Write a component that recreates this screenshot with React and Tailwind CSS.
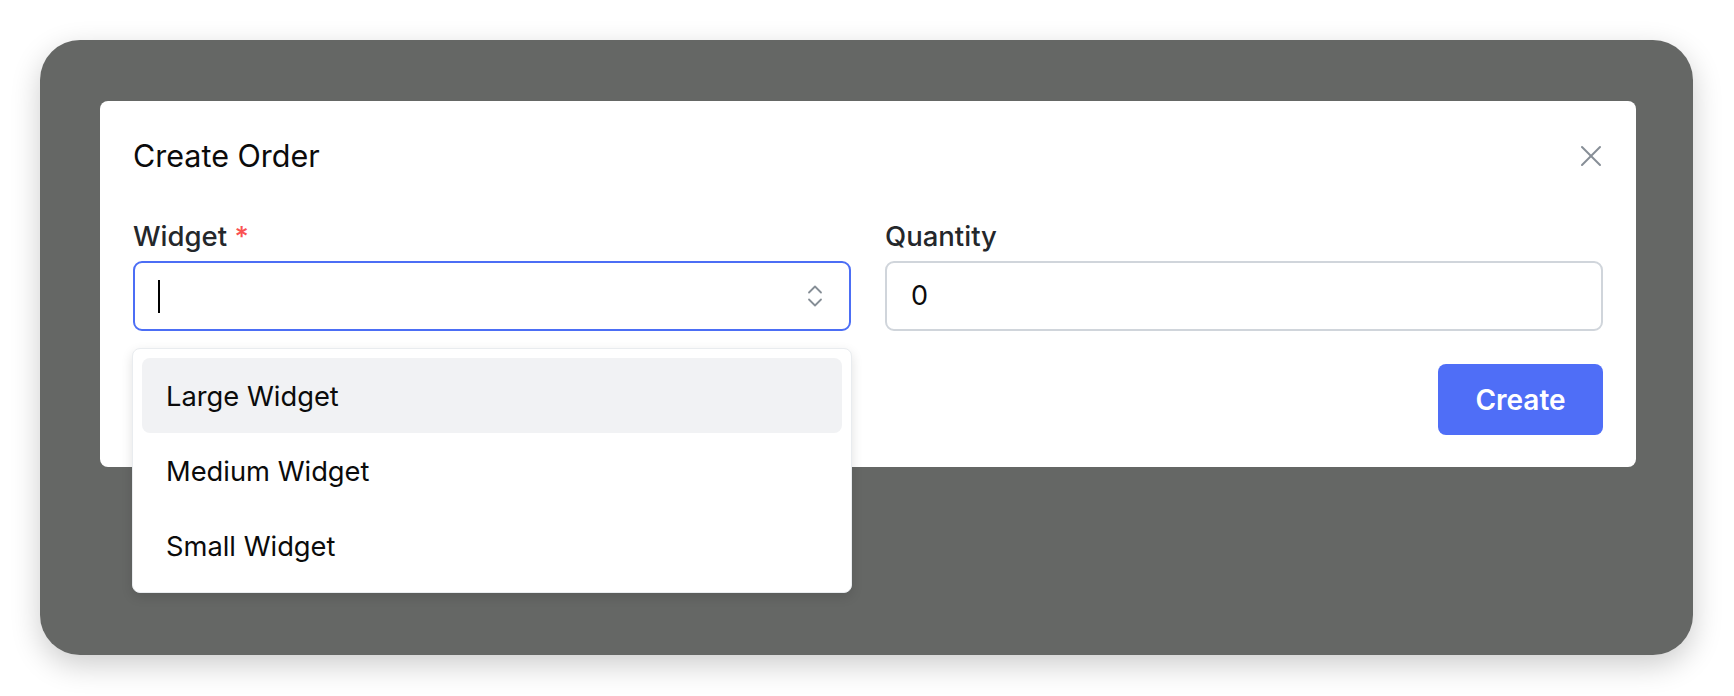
function SelectorIcon() {
  return (
    <svg width="16" height="24" viewBox="0 0 16 24" fill="none" stroke="#868e96" strokeWidth="1.8" strokeLinecap="round" strokeLinejoin="round">
      <path d="M2 8.5 L8 2.5 L14 8.5" />
      <path d="M2 15.5 L8 21.5 L14 15.5" />
    </svg>
  );
}

function CloseIcon() {
  return (
    <svg width="22" height="22" viewBox="0 0 22 22" fill="none" stroke="#868e96" strokeWidth="2" strokeLinecap="round">
      <path d="M2 2 L20 20" />
      <path d="M20 2 L2 20" />
    </svg>
  );
}

export default function App() {
  const options = ["Large Widget", "Medium Widget", "Small Widget"];

  return (
    <div className="min-h-screen bg-white pt-[40px] pl-[40px] pr-[41px] font-['Inter',sans-serif]">
      {/* Backdrop frame */}
      <div className="h-[615px] rounded-[40px] bg-[#656765] pt-[61px] pl-[60px] pr-[57px] shadow-[0_10px_30px_rgba(0,0,0,0.2)]">
        {/* Modal */}
        <div className="rounded-[8px] bg-white px-[33px] pt-[33px] pb-[32px]">
          {/* Header */}
          <div className="flex items-center justify-between h-[44px]">
            <h2 className="text-[30.5px] leading-[44px] text-[#0b0b0b] font-normal">Create Order</h2>
            <button type="button" className="mr-[1px]">
              <CloseIcon />
            </button>
          </div>

          {/* Fields */}
          <div className="mt-[40px] grid grid-cols-2 gap-[34px]">
            <div className="relative">
              <label className="block text-[27.5px] leading-[36px] font-medium text-[#24272b]">
                Widget <span className="text-[#fa5252]">*</span>
              </label>
              <div className="mt-[7px] h-[70px] rounded-[9px] border-2 border-[#4c6ef5] flex items-center justify-between pl-[23px] pr-[26px]">
                <span className="block w-[2px] h-[33px] bg-black" />
                <SelectorIcon />
              </div>

              {/* Dropdown */}
              <div className="absolute left-[-1px] right-[-1px] top-[130px] z-10 rounded-[8px] border border-[#e9ecef] bg-white p-[9px] shadow-[0_4px_12px_rgba(0,0,0,0.12)]">
                {options.map((opt, i) => (
                  <div
                    key={opt}
                    className={`h-[75px] flex items-center rounded-[8px] pl-[24px] pt-[3px] text-[27.3px] text-[#0b0b0b] ${
                      i === 0 ? "bg-[#f1f2f4]" : ""
                    }`}
                  >
                    {opt}
                  </div>
                ))}
              </div>
            </div>

            <div>
              <label className="block text-[27.5px] leading-[36px] font-medium text-[#24272b]">Quantity</label>
              <div className="mt-[7px] h-[70px] rounded-[9px] border-2 border-[#d0d5db] flex items-center pl-[24px] text-[27px] text-[#0b0b0b]">
                0
              </div>
            </div>
          </div>

          {/* Footer */}
          <div className="mt-[33px] flex justify-end">
            <button type="button" className="h-[71px] w-[165px] rounded-[8px] bg-[#4f6ef7] text-[28px] font-semibold text-white">
              Create
            </button>
          </div>
        </div>
      </div>
    </div>
  );
}
